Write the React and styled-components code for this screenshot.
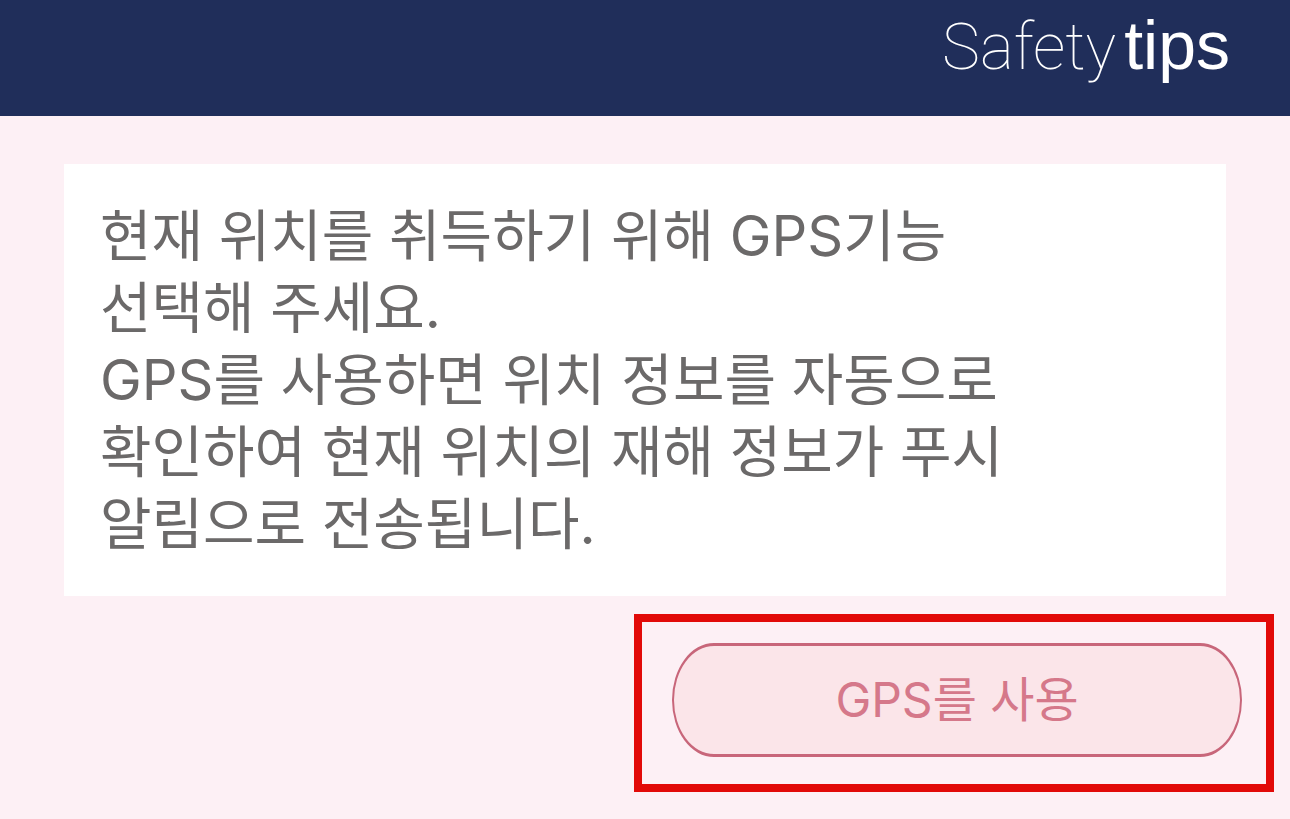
import React from "react";
import styled, { createGlobalStyle } from "styled-components";

const GlobalStyle = createGlobalStyle`
  * {
    box-sizing: border-box;
  }

  body {
    margin: 0;
    background-color: #fdf0f5;
    font-family: Inter, "Noto Sans CJK KR", sans-serif;
  }
`;

const Header = styled.header`
  display: flex;
  justify-content: flex-end;
  height: 116px;
  padding: 0 60px;
  background-color: #202e5a;
`;

const Logo = styled.div`
  display: flex;
  align-items: baseline;
  gap: 8px;
  line-height: 90px;
  color: #ffffff;
`;

const LogoThin = styled.span`
  font-family: Roboto, sans-serif;
  font-size: 64px;
  font-weight: 100;
`;

const LogoRegular = styled.span`
  font-family: "Liberation Sans", Arial, sans-serif;
  font-size: 68px;
`;

const Card = styled.section`
  margin: 48px 64px 18px;
  padding: 36px;
  background-color: #ffffff;
`;

const Message = styled.p`
  margin: 0;
  font-size: 56px;
  line-height: 72px;
  color: #6b6969;
`;

const Actions = styled.div`
  display: flex;
  justify-content: flex-end;
  padding: 0 16px 26px;
`;

const Highlight = styled.div`
  width: 640px;
  max-width: 100%;
  padding: 21px 24px 27px 30px;
  border: 8px solid #e20a08;
`;

const Button = styled.button`
  display: block;
  width: 100%;
  height: 114px;
  padding: 0;
  border: solid #c8667a;
  border-width: 3px 2px;
  border-radius: 42px / 57px;
  background-color: #fbe5e9;
  color: #d5788a;
  font-family: inherit;
  font-size: 48px;
  line-height: 60px;
  cursor: pointer;
`;

const App = () => {
  return (
    <>
      <GlobalStyle />
      <Header>
        <Logo>
          <LogoThin>Safety</LogoThin>
          <LogoRegular>tips</LogoRegular>
        </Logo>
      </Header>
      <main>
        <Card>
          <Message lang="ko">
            현재 위치를 취득하기 위해 GPS기능
            <br />
            선택해 주세요.
            <br />
            GPS를 사용하면 위치 정보를 자동으로
            <br />
            확인하여 현재 위치의 재해 정보가 푸시
            <br />
            알림으로 전송됩니다.
          </Message>
        </Card>
        <Actions>
          <Highlight>
            <Button type="button" lang="ko">GPS를 사용</Button>
          </Highlight>
        </Actions>
      </main>
    </>
  );
};

export default App;
